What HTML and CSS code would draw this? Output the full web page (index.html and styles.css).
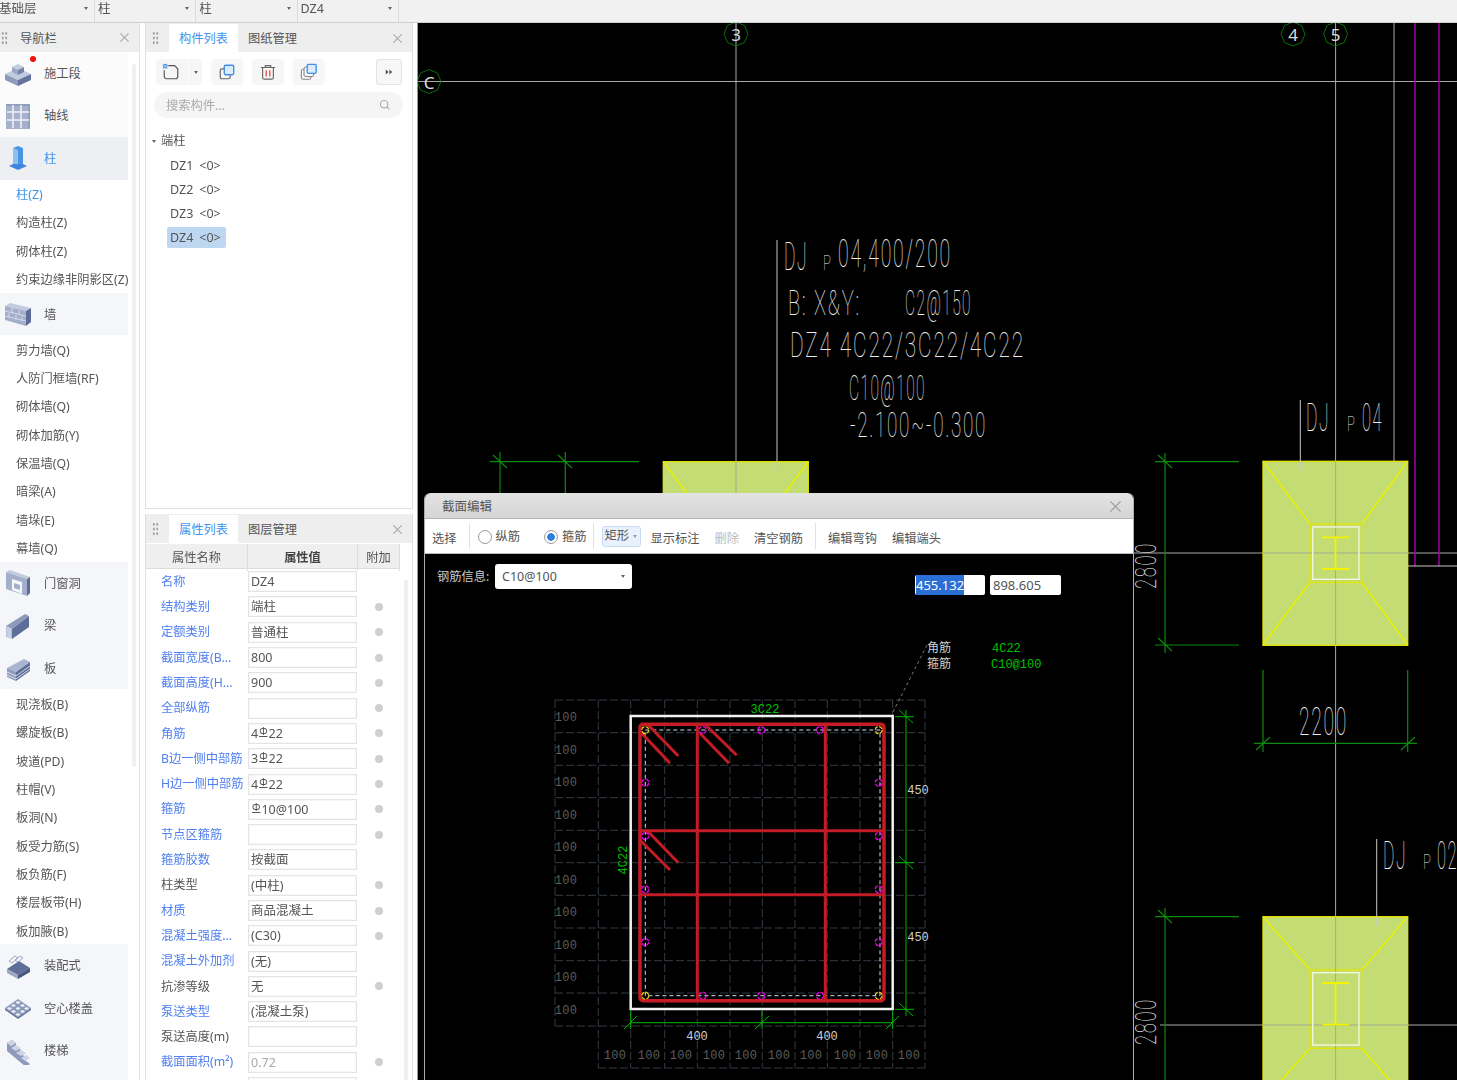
FILE: index.html
```html
<!DOCTYPE html>
<html lang="zh-CN">
<head>
<meta charset="utf-8">
<title>截面编辑</title>
<link rel="stylesheet" href="styles.css">
</head>
<body>
<div class="app">
  <div class="topbar">
    <div class="sel sel-first"><span class="sel-text">基础层</span><i class="caret"></i></div>
    <div class="sel"><span class="sel-text">柱</span><i class="caret"></i></div>
    <div class="sel"><span class="sel-text">柱</span><i class="caret"></i></div>
    <div class="sel"><span class="sel-text">DZ4</span><i class="caret"></i></div>
  </div>
  <div class="main">
    <aside class="nav">
      <div class="nav-head"><i class="grip"></i><span class="nav-title">导航栏</span><svg class="close" viewBox="0 0 12 12"><path d="M1.5 1.5l9 9M10.5 1.5l-9 9"/></svg></div>
      <div class="nav-list">
        <div class="grp grp-plain"><svg class="ico" viewBox="0 0 28 28"><path d="M1 15l13-6 13 6-13 6z" fill="#c3cbdf"/><path d="M1 15v6l13 6v-6z" fill="#8e9abb"/><path d="M27 15v6l-13 6v-6z" fill="#65739c"/><path d="M8 8l6-3 6 3-6 3z" fill="#c3cbdf"/><path d="M8 8v5l6 3v-5z" fill="#9aa6c4"/><path d="M20 8v5l-6 3v-5z" fill="#7684aa"/></svg><span>施工段</span><i class="badge"></i></div>
        <div class="grp grp-plain"><svg class="ico" viewBox="0 0 28 28"><rect x="2" y="2" width="24" height="25" fill="#a6b1cb"/><path d="M2 3h23v23" fill="none" stroke="#7c89ad" stroke-width="1"/><path d="M9 3v23M17 3v23M3 10h22M3 18h22" stroke="#eef1f7" stroke-width="1.6"/></svg><span>轴线</span></div>
        <div class="grp grp-on"><svg class="ico" viewBox="0 0 28 28"><path d="M9 4l5-2 5 2v17h-10z" fill="#4a94e6"/><path d="M14 6v15h-5V4z" fill="#8fc0f2"/><path d="M5 22l4-2h10l4 2-9 4z" fill="#3d87dc"/></svg><span class="blue">柱</span></div>
        <a class="sub blue">柱(Z)</a>
        <a class="sub">构造柱(Z)</a>
        <a class="sub">砌体柱(Z)</a>
        <a class="sub">约束边缘非阴影区(Z)</a>
        <div class="grp"><svg class="ico" viewBox="0 0 28 28"><path d="M1 6l5-3 21 5-5 3z" fill="#c3cbdf"/><path d="M1 6l21 5v15L1 20z" fill="#a3aeca"/><path d="M22 11l5-3v14l-5 4z" fill="#5d6c97"/><path d="M1 11l21 5M1 16l21 5M8 8v5M15 10v5M5 13v5M12 15v5M18 16v5" stroke="#dfe4ee" stroke-width=".8" fill="none"/></svg><span>墙</span></div>
        <a class="sub">剪力墙(Q)</a>
        <a class="sub">人防门框墙(RF)</a>
        <a class="sub">砌体墙(Q)</a>
        <a class="sub">砌体加筋(Y)</a>
        <a class="sub">保温墙(Q)</a>
        <a class="sub">暗梁(A)</a>
        <a class="sub">墙垛(E)</a>
        <a class="sub">幕墙(Q)</a>
        <div class="grp"><svg class="ico" viewBox="0 0 28 28"><path d="M2 3l4-2 20 7-3 2z" fill="#c3cbdf"/><path d="M2 3l21 7v17L2 20z" fill="#a3aeca"/><path d="M23 10l3-2v16l-3 3z" fill="#5d6c97"/><path d="M8 10l10 3v12l-10-4z" fill="#f5f6fa"/><path d="M10 14l6 2v5l-6-2z" fill="#a3aeca"/></svg><span>门窗洞</span></div>
        <div class="grp"><svg class="ico" viewBox="0 0 28 28"><path d="M2 14L21 2l4 2L8 17z" fill="#8e9abb"/><path d="M2 14l6 3v10l-6-2z" fill="#b6c0d7"/><path d="M8 17L25 4v11L8 27z" fill="#5f6e98"/><path d="M4 15v11M6 16v11" stroke="#e8ebf2" stroke-width=".7"/></svg><span>梁</span></div>
        <div class="grp"><svg class="ico" viewBox="0 0 28 28"><path d="M3 14L20 5l6 3-14 10z" fill="#aab5cf"/><path d="M3 14l9 4v9l-9-4z" fill="#8e9abb"/><path d="M12 18L26 8v9L12 27z" fill="#5f6e98"/><path d="M3 18l9 4 14-10M3 21l9 4 14-10" stroke="#eef1f6" stroke-width=".8" fill="none"/></svg><span>板</span></div>
        <a class="sub">现浇板(B)</a>
        <a class="sub">螺旋板(B)</a>
        <a class="sub">坡道(PD)</a>
        <a class="sub">柱帽(V)</a>
        <a class="sub">板洞(N)</a>
        <a class="sub">板受力筋(S)</a>
        <a class="sub">板负筋(F)</a>
        <a class="sub">楼层板带(H)</a>
        <a class="sub">板加腋(B)</a>
        <div class="grp"><svg class="ico" viewBox="0 0 28 28"><path d="M3 17l12-8 11 7-12 7z" fill="#5f6e98"/><path d="M3 17l11 6v4L3 21z" fill="#9aa6c4"/><path d="M26 16v4l-12 7v-4z" fill="#46557f"/><path d="M5 9l6-5 3 2-6 5zM11 8l5-4 3 2-5 4z" fill="none" stroke="#9aa6c4"/></svg><span>装配式</span></div>
        <div class="grp"><svg class="ico" viewBox="0 0 28 28"><path d="M1 14L14 5l13 9-13 9z" fill="#8e9abb"/><path d="M1 14v2l13 9v-2zM27 14v2l-13 9v-2z" fill="#66749d"/><g fill="#eef1f6"><ellipse cx="14" cy="8.500" rx="2" ry="1.300"/><ellipse cx="9.500" cy="11.500" rx="2" ry="1.300"/><ellipse cx="18.500" cy="11.500" rx="2" ry="1.300"/><ellipse cx="5.500" cy="14.500" rx="2" ry="1.300"/><ellipse cx="14" cy="14.500" rx="2" ry="1.300"/><ellipse cx="22.500" cy="14.500" rx="2" ry="1.300"/><ellipse cx="9.500" cy="17.500" rx="2" ry="1.300"/><ellipse cx="18.500" cy="17.500" rx="2" ry="1.300"/><ellipse cx="14" cy="20.500" rx="2" ry="1.300"/></g></svg><span>空心楼盖</span></div>
        <div class="grp"><svg class="ico" viewBox="0 0 28 28"><path d="M3 6L8 3l4 3v4l5 3v4l5 3v4l4 3-4 3L3 14z" fill="#8e9abb"/><path d="M3 6l5-3 4 3-5 3zM7 11l5-3 5 3-5 3zM12 16l5-3 5 3-5 3zM17 21l5-3 4 3-5 3z" fill="#cdd4e5"/></svg><span>楼梯</span></div>
        <div class="grp"></div>
      </div>
      <i class="nav-scroll"></i>
    </aside>

    <div class="col">
      <section class="pane pane-list">
        <div class="pane-head"><i class="grip"></i><span class="tab tab-on">构件列表</span><span class="tab">图纸管理</span><svg class="close" viewBox="0 0 12 12"><path d="M1.5 1.5l9 9M10.5 1.5l-9 9"/></svg></div>
        <div class="tools">
          <div class="tool tool-new"><svg viewBox="0 0 20 20" class="tool-ico"><path d="M7 3h7l3.500 3.500V15a2.500 2.500 0 0 1-2.500 2.500H5A2.500 2.500 0 0 1 2.500 15V8" fill="none" stroke="#555" stroke-width="1.300"/><path d="M1 1h5v5H1z" fill="#4a94e6"/><path d="M1.500 1.500l4 4M5.500 1.500l-4 4" stroke="#fff" stroke-width=".6"/></svg><i class="tool-split"><i class="caret"></i></i></div>
          <div class="tool"><svg viewBox="0 0 20 20" class="tool-ico"><rect x="2.500" y="6.500" width="11" height="11" rx="2" fill="none" stroke="#666" stroke-width="1.300"/><rect x="7" y="2.500" width="10.500" height="10.500" rx="1.500" fill="#dcebfb" stroke="#3f8fe8" stroke-width="1.500"/></svg></div>
          <div class="tool"><svg viewBox="0 0 20 20" class="tool-ico"><path d="M2 5h16M7 5V3h6v2" fill="none" stroke="#666" stroke-width="1.300"/><path d="M4 5v11a2 2 0 0 0 2 2h8a2 2 0 0 0 2-2V5" fill="none" stroke="#666" stroke-width="1.300"/><path d="M8 8v7M12 8v7" stroke="#e8504f" stroke-width="1.500"/></svg></div>
          <div class="tool"><svg viewBox="0 0 20 20" class="tool-ico"><rect x="1.500" y="7" width="10.500" height="11" rx="2" fill="none" stroke="#888" stroke-width="1.200"/><rect x="4.500" y="4.500" width="10.500" height="10.500" rx="2" fill="#fff" stroke="#888" stroke-width="1.200"/><rect x="8" y="1.500" width="10" height="10" rx="1.500" fill="#dcebfb" stroke="#3f8fe8" stroke-width="1.500"/></svg></div>
          <div class="tool-more"><svg viewBox="0 0 10 10" class="more-ico"><path d="M1 2l3.500 3L1 8zM5.500 2L9 5 5.500 8z" fill="#555"/></svg></div>
        </div>
        <div class="search"><span>搜索构件...</span><svg viewBox="0 0 14 14" class="search-ico"><circle cx="6" cy="6" r="4.300" fill="none" stroke="#aaa" stroke-width="1.300"/><path d="M9.200 9.200L12 12" stroke="#aaa" stroke-width="1.300"/></svg></div>
        <div class="tree">
          <div class="tree-root"><i class="caret"></i>端柱</div>
          <div class="tree-item"><span class="chip"><b>DZ1</b><b>&lt;0&gt;</b></span></div>
          <div class="tree-item"><span class="chip"><b>DZ2</b><b>&lt;0&gt;</b></span></div>
          <div class="tree-item"><span class="chip"><b>DZ3</b><b>&lt;0&gt;</b></span></div>
          <div class="tree-item"><span class="chip chip-on"><b>DZ4</b><b>&lt;0&gt;</b></span></div>
        </div>
      </section>
      <section class="pane pane-props">
        <div class="pane-head"><i class="grip"></i><span class="tab tab-on">属性列表</span><span class="tab">图层管理</span><svg class="close" viewBox="0 0 12 12"><path d="M1.5 1.5l9 9M10.5 1.5l-9 9"/></svg></div>
        <div class="thead"><span>属性名称</span><span class="th-strong">属性值</span><span>附加</span></div>
        <div class="rows">
          <div class="row"><span class="pn">名称</span><span class="pv">DZ4</span></div>
          <div class="row"><span class="pn">结构类别</span><span class="pv">端柱</span><i class="dot"></i></div>
          <div class="row"><span class="pn">定额类别</span><span class="pv">普通柱</span><i class="dot"></i></div>
          <div class="row"><span class="pn">截面宽度(B...</span><span class="pv">800</span><i class="dot"></i></div>
          <div class="row"><span class="pn">截面高度(H...</span><span class="pv">900</span><i class="dot"></i></div>
          <div class="row"><span class="pn">全部纵筋</span><span class="pv"></span><i class="dot"></i></div>
          <div class="row"><span class="pn">角筋</span><span class="pv">4<em class="bar">Φ</em>22</span><i class="dot"></i></div>
          <div class="row"><span class="pn">B边一侧中部筋</span><span class="pv">3<em class="bar">Φ</em>22</span><i class="dot"></i></div>
          <div class="row"><span class="pn">H边一侧中部筋</span><span class="pv">4<em class="bar">Φ</em>22</span><i class="dot"></i></div>
          <div class="row"><span class="pn">箍筋</span><span class="pv"><em class="bar">Φ</em>10@100</span><i class="dot"></i></div>
          <div class="row"><span class="pn">节点区箍筋</span><span class="pv"></span><i class="dot"></i></div>
          <div class="row"><span class="pn">箍筋胶数</span><span class="pv">按截面</span></div>
          <div class="row"><span class="pn pn-dark">柱类型</span><span class="pv">(中柱)</span><i class="dot"></i></div>
          <div class="row"><span class="pn">材质</span><span class="pv">商品混凝土</span><i class="dot"></i></div>
          <div class="row"><span class="pn">混凝土强度...</span><span class="pv">(C30)</span><i class="dot"></i></div>
          <div class="row"><span class="pn">混凝土外加剂</span><span class="pv">(无)</span></div>
          <div class="row"><span class="pn pn-dark">抗渗等级</span><span class="pv">无</span><i class="dot"></i></div>
          <div class="row"><span class="pn">泵送类型</span><span class="pv">(混凝土泵)</span></div>
          <div class="row"><span class="pn pn-dark">泵送高度(m)</span><span class="pv"></span></div>
          <div class="row"><span class="pn">截面面积(m²)</span><span class="pv pv-mute">0.72</span><i class="dot"></i></div>
          <div class="row"><span class="pn"></span><span class="pv"></span></div>
        </div>
        <i class="prop-scroll"></i>
      </section>
    </div>

    <div class="canvas">
      <svg class="cad" viewBox="417 23 1040 1057" width="1040" height="1057">
        <path class="axis" d="M736 23V493M1335.600 23V1080M1394 23V462M417 81.500H1457M1134 553H1457M1160 1025H1457"/>
        <path class="purple" d="M1415 23V566M1439 23V566"/>
        <path class="leader" d="M1408 566H1457M777 240V471M1300.300 400V470M1376.700 839V926"/>
        <path class="ring" d="M736 22l8.500 3.500 3.500 8.500-3.500 8.500-8.500 3.500-8.500-3.500-3.500-8.500 3.500-8.500zM1293 22l8.500 3.500 3.500 8.500-3.500 8.500-8.500 3.500-8.500-3.500-3.500-8.500 3.500-8.500zM1335.600 22l8.500 3.500 3.500 8.500-3.500 8.500-8.500 3.500-8.500-3.500-3.500-8.500 3.500-8.500zM429 69.500l8.500 3.500 3.500 8.500-3.500 8.500-8.500 3.500-8.500-3.500-3.500-8.500 3.500-8.500z"/>
        <text class="axis-label" x="736" y="41">3</text>
        <text class="axis-label" x="1293" y="41">4</text>
        <text class="axis-label" x="1335.600" y="41">5</text>
        <text class="axis-label" x="429" y="88.500">C</text>

        <g class="pad"><rect x="663.300" y="461.700" width="145" height="184"/><path d="M663.300 461.700L710 524M808.300 461.700L762 524"/></g>
        <g class="pad"><rect x="1263" y="461.300" width="144.700" height="184"/><path d="M1263 461.300L1310 524M1407.700 461.300L1361.700 524M1263 645.300L1310 582.300M1407.700 645.300L1361.700 582.300"/><rect x="1310" y="524" width="51.700" height="58.300"/></g>
        <g class="pad"><rect x="1263" y="916.700" width="144.700" height="184"/><path d="M1263 916.700L1310 970M1407.700 916.700L1361.700 970M1263 1100.700L1310 1048.300M1407.700 1100.700L1361.700 1048.300"/><rect x="1310" y="970" width="51.700" height="78.300"/></g>
        <path class="axis axis-over" d="M736 461V493M1335.600 461V645M1335.600 917V1080M1263 553H1407.700M1263 1025H1407.700"/>
        <g class="pad">
          <rect class="pad-white" x="1312.700" y="527" width="46.300" height="52.300"/><path class="beam" d="M1322.300 537.300H1349M1322.300 569H1349M1335.600 537.300V569"/>
          <rect class="pad-white" x="1312.700" y="972.700" width="46.300" height="72.300"/><path class="beam" d="M1322.300 983H1349M1322.300 1024.700H1349M1335.600 983V1024.700"/>
        </g>
        <path class="leader" d="M777 461V471M1300.300 461V470M1376.700 917V926"/>

        <path class="dim" d="M490 461.700H639M500 452V493M565.300 452V493M493 455L507 468M558 455L572 468M1155 461.700H1239M1155 645H1239M1165 453V653M1158 455L1172 468M1158 638L1172 651M1155 916.700H1239M1165 908V1080M1158 910L1172 923M1263 670V752M1407.700 670V752M1254 743.300H1417M1256 750L1270 737M1401 750L1415 737"/>

        <text class="tx" transform="translate(784 270) scale(.46 1)" font-size="38">DJ</text>
        <text class="tx" x="823" y="270" font-size="20" textLength="9" lengthAdjust="spacingAndGlyphs">P</text>
        <text class="tx" x="838" y="267" font-size="38" textLength="114" lengthAdjust="spacingAndGlyphs">04,400/200</text>
        <text class="tx" x="788" y="315" font-size="35" textLength="73" lengthAdjust="spacingAndGlyphs">B: X&amp;Y:</text>
        <text class="tx" x="905" y="315" font-size="35" textLength="67" lengthAdjust="spacingAndGlyphs">C2@150</text>
        <text class="tx" x="790" y="357" font-size="35" textLength="235" lengthAdjust="spacingAndGlyphs">DZ4 4C22/3C22/4C22</text>
        <text class="tx" x="849" y="400" font-size="35" textLength="77" lengthAdjust="spacingAndGlyphs">C10@100</text>
        <text class="tx" x="850" y="437" font-size="35" textLength="137" lengthAdjust="spacingAndGlyphs">-2.100~-0.300</text>
        <text class="tx" transform="translate(1306 431) scale(.46 1)" font-size="38">DJ</text>
        <text class="tx" x="1347" y="431" font-size="20" textLength="9" lengthAdjust="spacingAndGlyphs">P</text>
        <text class="tx" x="1362" y="431" font-size="38" textLength="21" lengthAdjust="spacingAndGlyphs">04</text>
        <text class="tx" transform="translate(1383 869) scale(.46 1)" font-size="38">DJ</text>
        <text class="tx" x="1423" y="869" font-size="20" textLength="9" lengthAdjust="spacingAndGlyphs">P</text>
        <text class="tx" x="1437" y="869" font-size="38" textLength="21" lengthAdjust="spacingAndGlyphs">02</text>
        <text class="tx" x="1299" y="735" font-size="38" textLength="49" lengthAdjust="spacingAndGlyphs">2200</text>
        <text class="tx" transform="translate(1156 589) rotate(-90)" font-size="30" textLength="47" lengthAdjust="spacingAndGlyphs">2800</text>
        <text class="tx" transform="translate(1156 1045) rotate(-90)" font-size="30" textLength="47" lengthAdjust="spacingAndGlyphs">2800</text>
      </svg>

      <div class="dialog">
        <div class="dlg-title"><span>截面编辑</span><svg class="dlg-close" viewBox="0 0 14 14"><path d="M1.500 1.500l11 11M12.500 1.500l-11 11"/></svg></div>
        <div class="dlg-tools">
          <span class="dt">选择</span><i class="dsep"></i>
          <label class="radio"><i class="rb"></i>纵筋</label>
          <label class="radio radio-second"><i class="rb rb-on"></i>箍筋</label><i class="dsep dsep-b"></i>
          <span class="shape">矩形<i class="caret"></i></span>
          <span class="dt">显示标注</span>
          <span class="dt dt-off">删除</span>
          <span class="dt">清空钢筋</span><i class="dsep dsep-c"></i>
          <span class="dt">编辑弯钩</span>
          <span class="dt">编辑端头</span>
        </div>
        <div class="dlg-body">
          <svg class="section" viewBox="425 554 709 526" width="709" height="526">
            <path class="grid" d="M555 700H925M555 732.700H925M555 765.300H925M555 797.700H925M555 830.300H925M555 862.700H925M555 895.300H925M555 928H925M555 960.700H925M555 993H925M555 1026H925M598 1068H925M555 700V1026M598.300 700V1068M630.700 700V1068M664.700 700V1068M697.300 700V1068M730 700V1068M762.300 700V1068M795 700V1068M827.300 700V1068M860 700V1068M892.700 700V1068M925 700V1068"/>
            <g class="g100">
              <text x="566" y="721">100</text><text x="566" y="754">100</text><text x="566" y="786">100</text><text x="566" y="819">100</text><text x="566" y="851">100</text><text x="566" y="884">100</text><text x="566" y="916">100</text><text x="566" y="949">100</text><text x="566" y="981">100</text><text x="566" y="1014">100</text>
              <text x="615" y="1059">100</text><text x="649" y="1059">100</text><text x="681" y="1059">100</text><text x="714" y="1059">100</text><text x="746" y="1059">100</text><text x="779" y="1059">100</text><text x="811" y="1059">100</text><text x="845" y="1059">100</text><text x="877" y="1059">100</text><text x="909" y="1059">100</text>
            </g>
            <path class="sec-leader" d="M893 712L927 645"/>
            <rect class="sec-outer" x="630.700" y="716" width="262" height="293"/>
            <path class="sec-dash" d="M645.300 730H880V995.700H645.300Z"/>
            <rect class="sec-red" x="640" y="724.300" width="244" height="276.400" rx="3"/>
            <path class="sec-tie" d="M697.300 724V1000M825.300 724V1000M640 830.700H884M640 894.700H884"/>
            <path class="sec-tie" d="M641.700 733.300L670 763.300M648.300 725L678.300 756M700 733.300L729 763.300M705.700 725L736.700 755.300M640 840L670 870M648.300 831.700L678.300 862.700"/>
            <g class="bar-m"><circle cx="702.700" cy="730" r="3.500"/><circle cx="761.300" cy="730" r="3.500"/><circle cx="820" cy="730" r="3.500"/><circle cx="702.700" cy="995.700" r="3.500"/><circle cx="761.300" cy="995.700" r="3.500"/><circle cx="820" cy="995.700" r="3.500"/><circle cx="645.300" cy="782.700" r="3.500"/><circle cx="645.300" cy="836" r="3.500"/><circle cx="645.300" cy="889.300" r="3.500"/><circle cx="645.300" cy="942" r="3.500"/><circle cx="878.700" cy="782.700" r="3.500"/><circle cx="878.700" cy="836" r="3.500"/><circle cx="878.700" cy="889.300" r="3.500"/><circle cx="878.700" cy="942" r="3.500"/></g>
            <g class="bar-y"><circle cx="645.300" cy="730" r="3.500"/><circle cx="878.700" cy="730" r="3.500"/><circle cx="645.300" cy="995.700" r="3.500"/><circle cx="878.700" cy="995.700" r="3.500"/></g>
            <path class="sec-dim" d="M895 716.700H914M895 862.700H914M895 1009.300H914M906 710V1016M899 710L913 723M899 856L913 869M899 1003L913 1016M630.700 1011V1029M762 1011V1029M892.700 1011V1029M630.700 1022.700H892.700M624 1029L637 1016M755 1029L769 1016M886 1029L899 1016"/>
            <text class="lab-g" x="765" y="713">3C22</text>
            <text class="lab-g" transform="translate(627 860) rotate(-90)">4C22</text>
            <text class="lab-w" x="918" y="794">450</text>
            <text class="lab-w" x="918" y="941">450</text>
            <text class="lab-w" x="697" y="1040">400</text>
            <text class="lab-w" x="827" y="1040">400</text>
            <text class="lab-w lab-s" x="927" y="652">角筋</text>
            <text class="lab-w lab-s" x="927" y="668">箍筋</text>
            <text class="lab-g lab-s" x="992" y="652">4C22</text>
            <text class="lab-g lab-s" x="991" y="668">C10@100</text>
          </svg>
          <div class="rebar-row">
            <span class="rebar-label">钢筋信息:</span>
            <div class="combo"><span>C10@100</span><i class="caret"></i></div>
            <div class="coords"><div class="coord"><span class="picked">455.132</span></div><div class="coord">898.605</div></div>
          </div>
        </div>
      </div>
    </div>
  </div>
</div>
</body>
</html>
```

FILE: styles.css
```css
* { box-sizing: border-box; }
html, body { margin: 0; height: 100%; overflow: hidden; background: #fff; }
body { font: 12.25px/1.2 "Noto Sans", "Noto Sans CJK SC", sans-serif; color: #555; }
.app { width: 1457px; height: 1080px; display: flex; flex-direction: column; overflow: hidden; filter: blur(.35px); }
i, em { font-style: normal; }
b { font-weight: 400; }

.caret { display: inline-block; width: 0; height: 0; border-left: 2.5px solid transparent; border-right: 2.5px solid transparent; border-top: 3px solid #666; flex: none; }

.topbar { height: 23px; flex: none; display: flex; background: #f1f1f1; border-bottom: 1px solid #cfcfcf; padding-right: 1058px; }
.sel { width: 101.300px; height: 22px; display: flex; align-items: center; justify-content: space-between; padding: 0 6px 6px 3px; border-right: 1px solid #dcdcdc; font-size: 12.500px; }
.sel-first { width: 95px; padding-left: 0; }
.sel-first .sel-text { margin-left: -1px; }

.main { flex: 1; display: flex; min-height: 0; }

.nav { width: 140px; flex: none; position: relative; border-right: 1px solid #e2e2e2; overflow: hidden; }
.nav-head { height: 29px; display: flex; align-items: center; background: #eeeeef; padding: 0 9px 0 1px; }
.nav-title { margin-left: 12px; flex: 1; padding-top: 4px; }
.grip { width: 7px; height: 14px; flex: none; background-image: radial-gradient(circle, #8a8a8a .9px, transparent 1.200px); background-size: 3.500px 4.700px; }
.close { width: 11px; height: 11px; flex: none; }
.close path { stroke: #aaa; stroke-width: 1.300; fill: none; }

.nav-list { width: 128px; }
.grp { height: 42.500px; display: flex; align-items: center; padding-left: 4px; background: #f5f6fa; position: relative; }
.grp-plain { background: #fbfbfc; }
.grp-on { background: #eeeff3; }
.grp > span { margin-left: 12px; padding-top: 2px; }
.ico { width: 28px; height: 28px; flex: none; }
.blue { color: #3f93ec; }
.badge { position: absolute; left: 30px; top: 4px; width: 6px; height: 6px; border-radius: 50%; background: #f01010; }
.sub { display: block; height: 28.330px; line-height: 28.330px; padding: 1.500px 0 0 16px; white-space: nowrap; }
.nav-scroll { position: absolute; left: 132px; top: 41px; width: 4px; height: 703px; background: #f0f0f0; border-radius: 2px; }

.col { width: 268px; margin-left: 5px; margin-right: 4px; flex: none; display: flex; flex-direction: column; gap: 5px; }
.pane { border: 1px solid #dedede; border-top: 0; position: relative; }
.pane-list { height: 486px; flex: none; }
.pane-props { flex: 1; min-height: 0; overflow: hidden; border-bottom: 0; }
.pane-head { height: 29px; display: flex; align-items: stretch; background: #eeeeef; padding: 1px 9px 0 6px; }
.pane-head .grip { align-self: center; margin-right: 10px; }
.pane-head .close { align-self: center; margin-left: auto; }
.tab { display: flex; align-items: center; padding: 2px 10px 0; color: #555; }
.tab-on { background: #fff; color: #3f93ec; }

.tools { display: flex; padding: 7px 10px 0; height: 40px; }
.tool { width: 32px; height: 26px; margin-right: 9px; background: #f6f6f6; border-radius: 4px; display: flex; align-items: center; justify-content: center; flex: none; }
.tool-new { width: 46px; justify-content: flex-start; padding-left: 6px; }
.tool-ico { width: 18px; height: 18px; flex: none; }
.tool-split { margin-left: 8px; width: 14px; height: 26px; border-left: 1px solid #fff; display: flex; align-items: center; justify-content: center; }
.tool-more { width: 26px; height: 26px; margin-left: auto; background: #f7f7f7; border: 1px solid #e2e2e2; border-radius: 3px; display: flex; align-items: center; justify-content: center; }
.more-ico { width: 8px; height: 8px; }
.search { height: 26px; margin: 0 9px 0 8px; background: #f5f5f5; border-radius: 13px; display: flex; align-items: center; justify-content: space-between; padding: 2px 12px 0; color: #aaa; }
.search-ico { width: 12px; height: 12px; margin-top: -2px; }
.tree { margin-top: 11px; }
.tree-root { height: 24px; display: flex; align-items: center; padding-left: 6px; gap: 5px; }
.tree-item { height: 24px; padding-left: 21px; display: flex; align-items: center; }
.chip { height: 21px; padding: 0 5px 0 3px; display: inline-flex; align-items: center; gap: 6px; border-radius: 2px; font-size: 12.500px; }
.chip-on { background: #bdd7f0; }

.thead { margin-top: 1px; height: 25px; display: grid; grid-template-columns: 102px 110px 42px; width: 254px; background: #efefef; border-bottom: 1px solid #dcdcdc; text-align: center; line-height: 27px; }
.thead span { border-right: 1px solid #dcdcdc; }
.th-strong { font-weight: 700; color: #444; }
.rows { width: 254px; }
.row { height: 25.300px; display: grid; grid-template-columns: 102px 110px 42px; align-items: center; }
.pn { padding: 1px 0 0 15px; color: #4f7ff0; white-space: nowrap; }
.pn-dark { color: #555; }
.pv { height: 21px; width: 109px; border: 1px solid #e4e4e4; padding-left: 2px; line-height: 19px; font-size: 12.500px; box-shadow: inset 0 0 0 .5px #f1f1f1; white-space: nowrap; }
.pv-mute { color: #aaa; }
.bar { font-size: 10px; position: relative; top: -3px; margin: 0 1px; text-decoration: underline; }
.dot { width: 8px; height: 8px; border-radius: 50%; background: #cfcfcf; justify-self: center; margin-left: -1px; }
.prop-scroll { position: absolute; left: 258px; top: 66px; width: 4px; height: 520px; background: #efefef; border-radius: 2px; }

.canvas { flex: 1; position: relative; background: #000; border-left: 1px solid #999; overflow: hidden; }
.cad { position: absolute; left: -1px; top: 0; display: block; }
.axis { stroke: #a9a9a9; stroke-width: 1; fill: none; }
.axis-over { stroke: #a3a893; }
.purple { stroke: #a000a0; stroke-width: 1.500; fill: none; }
.leader { stroke: #c8c8c8; stroke-width: 1; fill: none; }
.ring { stroke: #0a6e0a; stroke-width: 1; fill: none; }
.axis-label { fill: #ddd; font: 17px "Noto Sans", sans-serif; text-anchor: middle; }
.pad rect { fill: #c4dc74; stroke: #e6e600; stroke-width: 1.300; }
.pad path { stroke: #e8f000; stroke-width: 1.500; fill: none; }
.pad .pad-white { fill: none; stroke: #f4f8e4; }
.pad .beam { stroke: #f4f400; stroke-width: 1.800; }
.dim { stroke: #0b8a0b; stroke-width: 1.200; fill: none; }
.tx { fill: #ececec; font-family: Roboto, "Liberation Sans", sans-serif; font-weight: 100; letter-spacing: .09em; }

.dialog { position: absolute; left: 6px; top: 470px; width: 710px; bottom: 0; border-left: 1px solid #aaa; border-right: 1px solid #b0b0b0; border-radius: 6px 6px 0 0; display: flex; flex-direction: column; background: #000; }
.dlg-title { height: 26px; flex: none; display: flex; align-items: center; justify-content: space-between; padding: 2px 11px 0 17px; background: linear-gradient(rgba(236,236,236,.96), rgba(222,222,222,.96)); border-radius: 6px 6px 0 0; border-bottom: 1px solid #b5b5b5; font-size: 12.500px; }
.dlg-close { width: 13px; height: 13px; }
.dlg-close path { stroke: #999; stroke-width: 1.200; fill: none; }
.dlg-tools { height: 35px; flex: none; background: #fff; display: flex; align-items: center; padding: 4px 0 0 7px; border-bottom: 1px solid #bbb; }
.dt { margin-right: 15px; padding-top: 2px; }
.dt-off { color: #bbb; }
.dsep { width: 1px; height: 26px; background: #e2e2e2; margin: -4px 8px 0 -3px; flex: none; }
.dsep-b { margin: -4px 8px 0 6px; }
.dsep-c { margin: -4px 12px 0 -3px; }
.radio { display: flex; align-items: center; gap: 4px; margin-top: -2px; }
.radio-second { margin-left: 24px; }
.rb { width: 14px; height: 14px; border-radius: 50%; border: 1px solid #999; background: #fff; }
.rb-on { border-color: #999; background: radial-gradient(circle, #2f7de0 3.500px, #fff 4px); }
.shape { width: 39px; height: 21px; margin-right: 10px; border: 1px solid #c8dcf5; border-radius: 3px; background: #e9f2fc; display: flex; align-items: center; padding-left: 2px; gap: 4px; margin-top: -3px; }
.shape .caret { border-top-color: #999; }
.dlg-body { flex: 1; position: relative; overflow: hidden; }
.section { position: absolute; left: 0; top: 0; display: block; }
.grid { stroke: #333a44; stroke-width: 1; stroke-dasharray: 8 3; fill: none; }
.g100 text { fill: #5c5c5c; font: 12px "Liberation Mono", monospace; text-anchor: middle; letter-spacing: .3px; }
.sec-leader { stroke: #777; stroke-dasharray: 3 3; fill: none; }
.sec-outer { fill: none; stroke: #f2f2f2; stroke-width: 2.500; }
.sec-dash { fill: none; stroke: #cfdcec; stroke-width: 1; stroke-dasharray: 4 3; }
.sec-red { fill: none; stroke: #c41c24; stroke-width: 3.500; }
.sec-tie { stroke: #c41c24; stroke-width: 3; fill: none; }
.bar-m circle { fill: none; stroke: #f000f0; stroke-width: 1.300; stroke-dasharray: 4 1.500; }
.bar-y circle { fill: none; stroke: #eccc20; stroke-width: 1.300; stroke-dasharray: 4 1.500; }
.sec-dim { stroke: #00b400; stroke-width: 1; fill: none; }
.lab-g { fill: #00c000; font: 12px "Liberation Mono", monospace; text-anchor: middle; }
.lab-w { fill: #d0d0d0; font: 12px "Liberation Mono", monospace; text-anchor: middle; }
.lab-s { text-anchor: start; font-family: "Noto Sans CJK SC", monospace; }
.lab-g.lab-s { font-family: "Liberation Mono", monospace; }

.rebar-row { position: relative; display: flex; padding: 10px 0 0 12px; align-items: flex-start; }
.rebar-label { color: #ccc; width: 58px; flex: none; line-height: 25px; }
.combo { width: 137px; height: 25px; background: #fff; border-radius: 3px; display: flex; align-items: center; justify-content: space-between; padding: 0 7px; color: #555; font-size: 12.500px; }
.coords { display: flex; gap: 5px; margin: 11px 0 0 283px; }
.coord { width: 70px; height: 20px; background: #fff; border-radius: 2px; color: #555; font-size: 13px; line-height: 20px; padding-left: 3px; }
.coord:first-child { padding-left: 1px; }
.coord:last-child { width: 71px; }
.picked { background: #2a6fd6; color: #fff; display: inline-block; padding: 0; }
```
